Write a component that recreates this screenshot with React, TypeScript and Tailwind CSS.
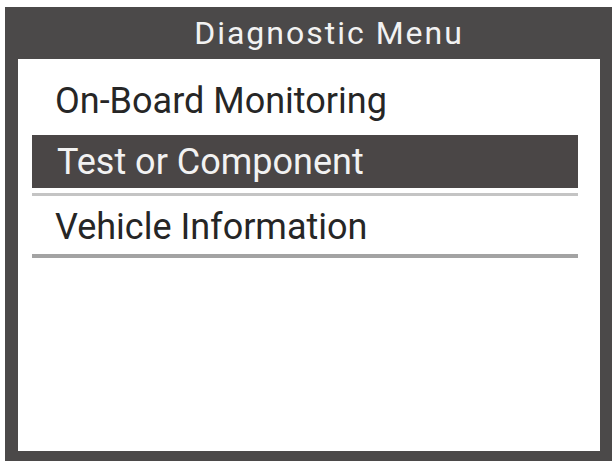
// Diagnostic menu screen
const items = ["On-Board Monitoring", "Test or Component", "Vehicle Information"];

export default function App() {
  return (
    <div
      className="w-[615px] h-[465px] bg-white pt-[7px] pl-[5px] pr-[3px] pb-[4px]"
      style={{ fontFamily: "Roboto, 'Liberation Sans', sans-serif" }}
    >
      <div className="flex flex-col h-full bg-[#4b4949] pl-[13px] pr-[12px] pb-[10px]">
        <div className="h-[52px] flex items-center justify-center pl-[40px] leading-none text-[32px] text-[#f2f2f2] tracking-[2px]">
          Diagnostic Menu
        </div>
        <div className="flex-1 bg-white pl-[14px] pr-[22px] pt-[17px]">
          <div className="h-[50px] mb-[9px] flex items-center pl-[23px] leading-none text-[36px] text-[#262626]">
            {items[0]}
          </div>
          <div className="h-[53px] flex items-center pl-[25px] leading-none text-[36px] text-[#f2f2f2] bg-[#4a4646]">
            {items[1]}
          </div>
          <div className="mt-[5px] h-[3px] bg-[#c4c4c4]" />
          <div className="h-[58px] flex items-center pl-[23px] pt-[3px] leading-none text-[36px] text-[#262626]">
            {items[2]}
          </div>
          <div className="h-[4px] bg-[#a3a3a3]" />
        </div>
      </div>
    </div>
  );
}
